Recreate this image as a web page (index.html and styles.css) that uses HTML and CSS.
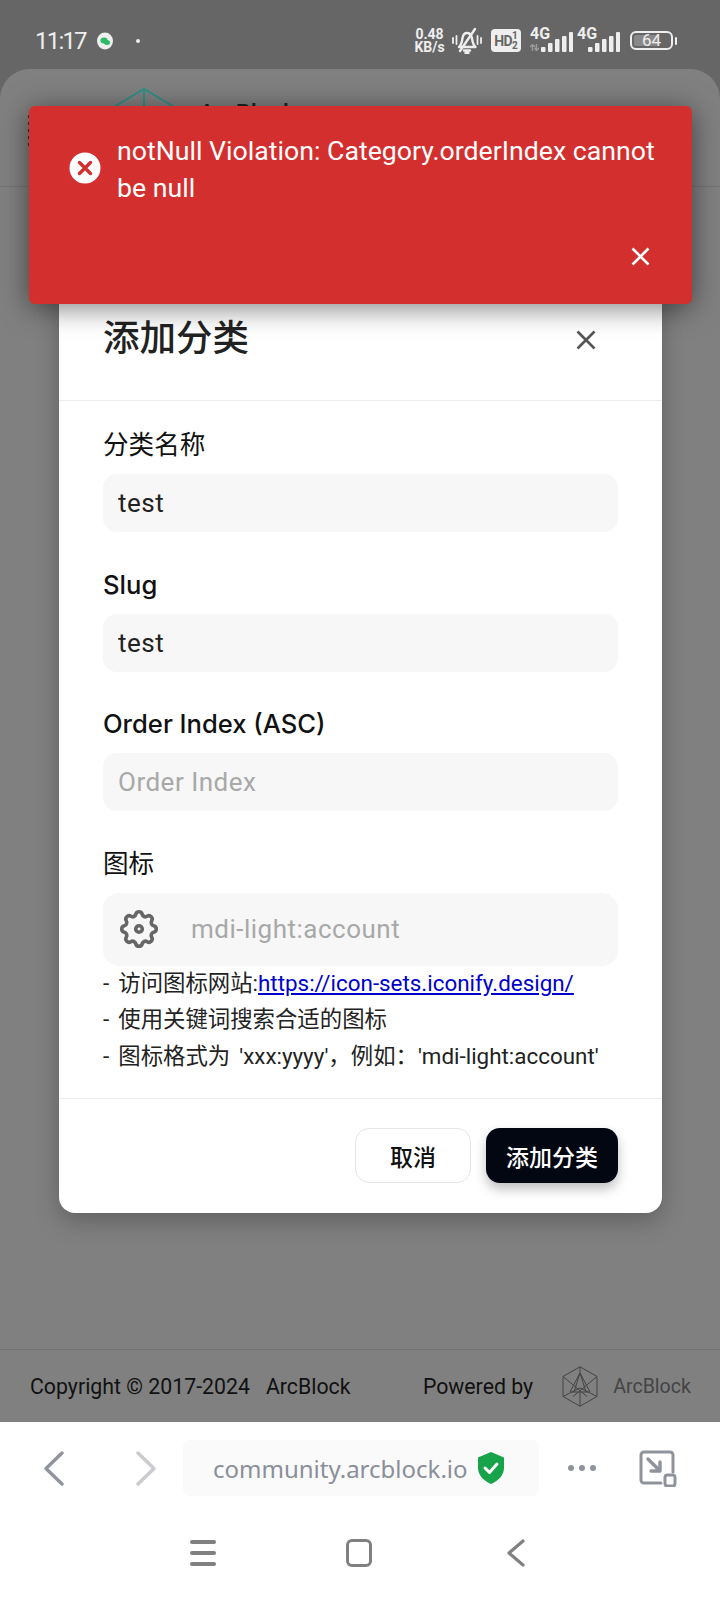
FILE: index.html
```html
<!DOCTYPE html>
<html lang="zh">
<head>
    <meta charset="UTF-8">
    <meta name="viewport" content="width=device-width, initial-scale=1.0">
    <title>添加分类</title>
    <link rel="stylesheet" href="styles.css">
</head>
<body>
<div id="screen">
    <!-- phone status bar -->
    <div class="statusBar">
        <div class="statusLeft">
            <span class="time">11:17</span>
            <svg class="wechat" width="16" height="18" viewBox="0 0 16 18"><ellipse cx="8" cy="9" rx="8" ry="8.5" fill="#eee"/><ellipse cx="7" cy="8.5" rx="3.6" ry="3" fill="#2fb866"/><ellipse cx="10" cy="10.5" rx="3" ry="2.5" fill="#2fb866"/></svg>
            <span class="dot"></span>
        </div>
        <div class="statusRight">
            <div class="speed">0.48<br>KB/s</div>
            <svg class="bell" width="30" height="27" viewBox="0 0 30 27" fill="none" stroke="#eee" stroke-width="2.4" stroke-linecap="round" stroke-linejoin="round">
                <path d="M7 20c2.500-2 3-5 3.500-9 .6-3 2.500-5 4.500-5s4 1.500 4.800 4.500c.7 3 .7 7 3.700 9.500z"/>
                <path d="M12 23.500h6M13.500 26h3"/>
                <path d="M8 24L23 2"/>
                <path d="M1 11v5M4.500 9v8M25.500 9v8M29 11v5" stroke-width="1.800"/>
            </svg>
            <div class="hd"><span class="hdText">HD</span><span class="hdNums"><i>1</i><i>2</i></span></div>
            <div class="signal">
                <span class="net">4G</span>
                <svg class="arrows" width="9" height="7" viewBox="0 0 9 7" fill="none" stroke="#999" stroke-width="1.500"><path d="M2.500 7V1M0 3l2.500-2.500L5 3M6.500 0v6M4.500 4l2 2.500L9 4"/></svg>
                <svg width="32" height="20" viewBox="0 0 32 20" fill="#eee"><rect x="0" y="15" width="4.500" height="5" rx="1"/><rect x="7" y="11" width="4.500" height="9" rx="1"/><rect x="14" y="7" width="4.500" height="13" rx="1"/><rect x="21" y="4" width="4.500" height="16" rx="1"/><rect x="28" y="0" width="4" height="20" rx="1"/></svg>
            </div>
            <div class="signal">
                <span class="net">4G</span>
                <svg width="32" height="20" viewBox="0 0 32 20" fill="#eee"><rect x="0" y="15" width="4.500" height="5" rx="1"/><rect x="7" y="11" width="4.500" height="9" rx="1"/><rect x="14" y="7" width="4.500" height="13" rx="1"/><rect x="21" y="4" width="4.500" height="16" rx="1"/><rect x="28" y="0" width="4" height="20" rx="1"/></svg>
            </div>
            <div class="battery"><div class="batteryBody"><div class="batteryFill"></div><span>64</span></div><div class="batteryNub"></div></div>
        </div>
    </div>

    <!-- the site behind the dialog -->
    <div class="page">
        <div class="siteHeader">
            <div class="burger"><span></span><span></span><span></span><span></span><span></span></div>
            <svg class="siteLogo" width="66" height="50" viewBox="0 0 66 50" fill="none" stroke="#2f8f83" stroke-width="2"><path d="M1 20L33 1l32 19M33 1v30"/></svg>
            <span class="siteName">ArcBlock</span>
        </div>
        <div class="siteMain"></div>
        <div class="siteFooter">
            <div class="copy"><span>Copyright © 2017-2024</span><span>ArcBlock</span></div>
            <div class="powered">
                <span>Powered by</span>
                <svg width="36" height="41" viewBox="0 0 36 41" fill="none" stroke="#444" stroke-width="1">
                    <path d="M18 .8L35 10.500v20L18 40.200 1 30.500v-20z"/>
                    <path d="M1 10.500l24 20M35 10.500l-24 20M18 .8v6M18 26v14.200M18 7L8 26h20zM18 7l-6 19M18 7l6 19M1 30.500L18 22l17 8.500"/>
                </svg>
                <span class="arcName">ArcBlock</span>
            </div>
        </div>
    </div>

    <!-- browser toolbar + android nav -->
    <div class="browser">
        <div class="toolbar">
            <svg class="navBtn" width="22" height="35" viewBox="0 0 22 35" fill="none" stroke="#8f939b" stroke-width="3.400" stroke-linecap="round" stroke-linejoin="round"><path d="M19 2L3 17.500 19 33"/></svg>
            <svg class="navBtn fwd" width="22" height="35" viewBox="0 0 22 35" fill="none" stroke="#c9cbcf" stroke-width="3.400" stroke-linecap="round" stroke-linejoin="round"><path d="M3 2l16 15.500L3 33"/></svg>
            <div class="urlPill">
                <span class="url">community.arcblock.io</span>
                <svg width="28" height="32" viewBox="0 0 28 32"><path d="M14 0l13 5.500v10c0 8-6 13.500-13 16.500C7 29 1 23.500 1 15.500v-10z" fill="#16a34a"/><path d="M8 16l4.500 4.500L20 12" fill="none" stroke="#fff" stroke-width="3" stroke-linecap="round" stroke-linejoin="round"/></svg>
            </div>
            <div class="more"><span></span><span></span><span></span></div>
            <svg class="shrink" width="38" height="37" viewBox="0 0 38 37" fill="none" stroke="#8f939b" stroke-width="3" stroke-linecap="round" stroke-linejoin="round">
                <path d="M22 33H5a3 3 0 0 1-3-3V5a3 3 0 0 1 3-3h26a3 3 0 0 1 3 3v17"/>
                <path d="M9 9l12 12M21 12v9H12" stroke-width="3.400"/>
                <rect x="26" y="25" width="10" height="11" rx="2.500"/>
            </svg>
        </div>
        <div class="androidNav">
            <div class="menuIcon"><span></span><span></span><span></span></div>
            <div class="homeIcon"></div>
            <svg width="20" height="28" viewBox="0 0 20 28" fill="none" stroke="#808080" stroke-width="3.200" stroke-linecap="round" stroke-linejoin="round"><path d="M17 2L3 14l14 12"/></svg>
        </div>
    </div>

    <!-- dialog -->
    <div class="dialog">
        <div class="dialogHead">
            <h2>添加分类</h2>
            <svg width="20" height="20" viewBox="0 0 20 20" fill="none" stroke="#555" stroke-width="2.600"><path d="M1.500 1.500l17 17M18.500 1.500l-17 17"/></svg>
        </div>
        <form class="dialogBody">
            <div class="field">
                <label class="cjk">分类名称</label>
                <input class="textInput" type="text" value="test">
            </div>
            <div class="field">
                <label>Slug</label>
                <input class="textInput" type="text" value="test">
            </div>
            <div class="field">
                <label>Order Index (ASC)</label>
                <input class="textInput" type="text" placeholder="Order Index">
            </div>
            <div class="field">
                <label class="cjk">图标</label>
                <div class="iconInput">
                    <svg width="46" height="46" viewBox="0 0 24 24" fill="none" stroke="#666" stroke-width="1.900" stroke-linejoin="round"><path d="M10.325 4.317c.426 -1.756 2.924 -1.756 3.350 0a1.724 1.724 0 0 0 2.573 1.066c1.543 -.94 3.310 .826 2.370 2.370a1.724 1.724 0 0 0 1.065 2.572c1.756 .426 1.756 2.924 0 3.350a1.724 1.724 0 0 0 -1.066 2.573c.94 1.543 -.826 3.310 -2.370 2.370a1.724 1.724 0 0 0 -2.572 1.065c-.426 1.756 -2.924 1.756 -3.350 0a1.724 1.724 0 0 0 -2.573 -1.066c-1.543 .94 -3.310 -.826 -2.370 -2.370a1.724 1.724 0 0 0 -1.065 -2.572c-1.756 -.426 -1.756 -2.924 0 -3.350a1.724 1.724 0 0 0 1.066 -2.573c-.94 -1.543 .826 -3.310 2.370 -2.370c1 .608 2.296 .07 2.572 -1.065z"/><circle cx="12" cy="12" r="1.700"/></svg>
                    <input type="text" placeholder="mdi-light:account">
                </div>
                <div class="help">
                    <div>- 访问图标网站:<a href="#">https://icon-sets.iconify.design/</a></div>
                    <div>- 使用关键词搜索合适的图标</div>
                    <div>- 图标格式为 'xxx:yyyy'，例如：'mdi-light:account'</div>
                </div>
            </div>
        </form>
        <div class="dialogActions">
            <button class="btn btnCancel" type="button">取消</button>
            <button class="btn btnPrimary" type="button">添加分类</button>
        </div>
    </div>

    <!-- error toast -->
    <div class="toast">
        <div class="toastMsg">
            <svg width="32" height="32" viewBox="0 0 32 32"><circle cx="16" cy="16" r="15.500" fill="#fff"/><path d="M10.500 10.500l11 11M21.500 10.500l-11 11" stroke="#d32f2f" stroke-width="3.400" stroke-linecap="round"/></svg>
            <p>notNull Violation: Category.orderIndex cannot be null</p>
        </div>
        <div class="toastAction">
            <svg width="19" height="19" viewBox="0 0 19 19" fill="none" stroke="#fff" stroke-width="2.600"><path d="M1.500 1.500l16 16M17.500 1.500l-16 16"/></svg>
        </div>
    </div>
</div>
</body>
</html>
```

FILE: styles.css
```css
*{
    box-sizing: border-box;
}
html, body{
    margin: 0;
    padding: 0;
}
body{
    font-family: Roboto, "Noto Sans CJK SC", sans-serif;
    color: #222;
}
#screen{
    position: relative;
    width: 720px;
    height: 1600px;
    overflow: hidden;
    display: flex;
    flex-direction: column;
    background-color: #666;
}

/* status bar */
.statusBar{
    height: 69px;
    flex: none;
    display: flex;
    justify-content: space-between;
    align-items: center;
    padding: 12px 43px 0 35px;
    color: #eee;
}
.statusLeft{
    display: flex;
    align-items: center;
}
.time{
    font-size: 24px;
    letter-spacing: -1.8px;
    width: 62px;
}
.dot{
    width: 4px;
    height: 4px;
    border-radius: 50%;
    background-color: #eee;
    margin-left: 23px;
}
.statusRight{
    display: flex;
    align-items: center;
}
.speed{
    width: 33px;
    font-weight: 700;
    font-size: 14px;
    line-height: 13px;
    text-align: center;
}
.bell{
    margin-left: 6px;
}
.hd{
    display: flex;
    align-items: center;
    justify-content: center;
    width: 30px;
    height: 23px;
    margin-left: 9px;
    border-radius: 4px;
    background-color: #eee;
    color: #666;
    font-weight: 700;
}
.hdText{
    font-size: 14px;
    letter-spacing: -0.5px;
}
.hdNums{
    display: flex;
    flex-direction: column;
    font-size: 10px;
    line-height: 10px;
}
.hdNums i{
    font-style: normal;
}
.signal{
    position: relative;
    width: 43px;
    height: 22px;
    margin-left: 9px;
    display: flex;
    justify-content: flex-end;
    align-items: flex-end;
}
.signal + .signal{
    margin-left: 4px;
}
.net{
    position: absolute;
    left: 0;
    top: -4px;
    font-weight: 700;
    font-size: 16px;
    line-height: 16px;
}
.arrows{
    position: absolute;
    left: 0;
    bottom: 1px;
}
.battery{
    display: flex;
    align-items: center;
    margin-left: 10px;
}
.batteryBody{
    position: relative;
    width: 43px;
    height: 19px;
    border: 2px solid #eee;
    border-radius: 6px;
    padding: 2px;
    display: flex;
    align-items: center;
    justify-content: center;
}
.batteryFill{
    position: absolute;
    left: 2px;
    top: 2px;
    bottom: 2px;
    width: 24px;
    border-radius: 2px;
    background-color: #888;
}
.batteryBody span{
    position: relative;
    font-size: 17px;
    line-height: 15px;
}
.batteryNub{
    width: 2px;
    height: 8px;
    margin-left: 2px;
    border-radius: 1px;
    background-color: #eee;
}

/* page behind */
.page{
    flex: 1;
    display: flex;
    flex-direction: column;
    background-color: #808080;
    border-radius: 30px 30px 0 0;
}
.siteHeader{
    height: 118px;
    flex: none;
    display: flex;
    align-items: flex-start;
    border-bottom: 1px solid #747474;
    padding: 19px 0 0 28px;
}
.burger{
    display: flex;
    flex-direction: column;
    gap: 4px;
    margin-top: 27px;
}
.burger span{
    width: 2px;
    height: 3px;
    background-color: #333;
}
.siteLogo{
    margin-left: 81px;
}
.siteName{
    font-size: 24px;
    font-weight: 500;
    color: #222;
    margin-left: 22px;
    margin-top: 11px;
}
.siteMain{
    flex: 1;
}
.siteFooter{
    height: 73px;
    flex: none;
    display: flex;
    justify-content: space-between;
    align-items: center;
    border-top: 1px solid #727272;
    padding: 0 29px 0 30px;
    font-size: 21.3px;
    color: #111;
}
.copy{
    display: flex;
    gap: 16px;
}
.powered{
    display: flex;
    align-items: center;
}
.powered svg{
    margin-left: 29px;
}
.arcName{
    margin-left: 15px;
    font-size: 19.6px;
    color: #444;
}

/* browser bar */
.browser{
    height: 178px;
    flex: none;
    background-color: #fff;
}
.toolbar{
    height: 101px;
    display: flex;
    align-items: center;
    padding: 0 0 9px 43px;
}
.fwd{
    margin-left: 70px;
}
.urlPill{
    width: 356px;
    height: 56px;
    margin-left: 26px;
    padding-left: 30px;
    display: flex;
    align-items: center;
    gap: 9px;
    background-color: #fafafa;
    border-radius: 6px;
}
.url{
    font-family: "Noto Sans", sans-serif;
    font-size: 24px;
    color: #8a8f99;
}
.more{
    display: flex;
    gap: 5px;
    margin-left: 29px;
}
.more span{
    width: 6px;
    height: 6px;
    border-radius: 50%;
    background-color: #8f939b;
}
.shrink{
    margin-left: 43px;
}
.androidNav{
    height: 60px;
    display: flex;
    align-items: center;
    padding-left: 190px;
}
.menuIcon{
    display: flex;
    flex-direction: column;
    gap: 7px;
    width: 26px;
}
.menuIcon span{
    height: 4px;
    border-radius: 2px;
    background-color: #808080;
}
.homeIcon{
    width: 26px;
    height: 28px;
    margin-left: 130px;
    border: 3.500px solid #808080;
    border-radius: 6px;
}
.androidNav svg{
    margin-left: 134px;
}

/* dialog */
.dialog{
    position: absolute;
    left: 59px;
    top: 280px;
    width: 603px;
    height: 933px;
    background-color: #fff;
    border-radius: 16px;
    box-shadow: 0 8px 24px rgba(0, 0, 0, 0.25);
    display: flex;
    flex-direction: column;
}
.dialogHead{
    height: 121px;
    flex: none;
    display: flex;
    align-items: center;
    justify-content: space-between;
    padding: 0 66px 0 44px;
    border-bottom: 1px solid #ececec;
}
.dialogHead h2{
    margin: 0 0 10px;
    font-size: 36.5px;
    font-weight: 500;
    color: #222;
}
.dialogBody{
    flex: 1;
    padding: 26px 44px 0;
    display: flex;
    flex-direction: column;
    gap: 34.5px;
}
.field{
    display: flex;
    flex-direction: column;
    gap: 11px;
}
.field label{
    font-family: Inter, "Noto Sans CJK SC", sans-serif;
    font-size: 25.6px;
    line-height: 36px;
    font-weight: 500;
    color: #111;
}
.field .cjk{
    font-weight: 400;
}
input{
    border: 0;
    outline: 0;
    background: none;
    padding: 0;
    font-family: inherit;
    font-size: 26px;
    letter-spacing: 0.5px;
    color: #222;
}
input::placeholder{
    color: #a8a8a8;
    opacity: 1;
}
.textInput{
    height: 58px;
    width: 100%;
    padding: 0 15px;
    border-radius: 14px;
    background-color: #f7f7f7;
}
.iconInput{
    height: 73px;
    display: flex;
    align-items: center;
    gap: 29px;
    padding-left: 13px;
    border-radius: 16px;
    background-color: #f7f7f7;
}
.help{
    margin-top: -12px;
    font-size: 22.4px;
    line-height: 36.5px;
    word-spacing: 3.5px;
    color: #222;
}
.help a{
    color: #0000cc;
}
.dialogActions{
    height: 115px;
    flex: none;
    display: flex;
    justify-content: flex-end;
    gap: 15px;
    padding: 29px 44px 0;
    border-top: 1px solid #ececec;
}
.btn{
    height: 55px;
    border-radius: 14px;
    font-family: inherit;
    font-size: 23px;
    font-weight: 500;
    cursor: pointer;
}
.btnCancel{
    width: 116px;
    border: 1px solid #e6e6e6;
    background-color: #fff;
    color: #111;
}
.btnPrimary{
    width: 132px;
    border: 0;
    background-color: #030712;
    color: #fff;
    box-shadow: 0 6px 12px rgba(0, 0, 0, 0.25);
}

/* toast */
.toast{
    position: absolute;
    left: 29px;
    top: 106px;
    width: 663px;
    height: 198px;
    padding: 27px 42px 0 40px;
    background-color: #d32f2f;
    border-radius: 6px;
    box-shadow: 0 4px 28px rgba(0, 0, 0, 0.5);
    color: #fff;
    display: flex;
    flex-direction: column;
}
.toastMsg{
    display: flex;
    align-items: center;
    gap: 16px;
    margin-right: -10px;
}
.toastMsg svg{
    flex: none;
    margin-top: -3px;
}
.toastMsg p{
    margin: 0;
    font-size: 26.7px;
    line-height: 36.5px;
}
.toastAction{
    display: flex;
    justify-content: flex-end;
    margin-top: 41px;
}
```
